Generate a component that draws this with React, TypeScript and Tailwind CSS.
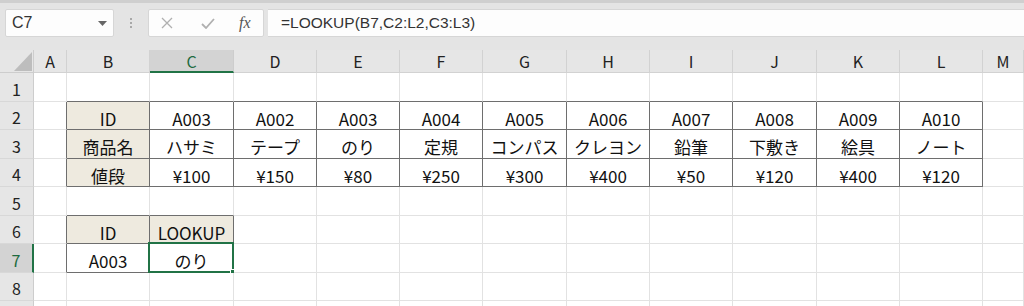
import React from "react"

const COL_LETTERS = ["A", "B", "C", "D", "E", "F", "G", "H", "I", "J", "K", "L", "M"]
const COL_W = ["w-[33px]", "w-[83px]", "w-[84px]", "w-[83px]", "w-[83px]", "w-[83px]", "w-[84px]", "w-[83px]", "w-[83px]", "w-[84px]", "w-[83px]", "w-[83px]", "w-[41px]"]
const ROW_H = ["h-[29px]", "h-[28px]", "h-[29px]", "h-[28px]", "h-[29px]", "h-[28px]", "h-[29px]", "h-[28px]", "h-[29px]"]

// data keyed by row number -> column index (0 = A)
const DATA: Record<number, string[]> = {
  2: ["", "ID", "A003", "A002", "A003", "A004", "A005", "A006", "A007", "A008", "A009", "A010"],
  3: ["", "商品名", "ハサミ", "テープ", "のり", "定規", "コンパス", "クレヨン", "鉛筆", "下敷き", "絵具", "ノート"],
  4: ["", "値段", "¥100", "¥150", "¥80", "¥250", "¥300", "¥400", "¥50", "¥120", "¥400", "¥120"],
  6: ["", "ID", "LOOKUP"],
  7: ["", "A003", "のり"],
}

const inTable = (r: number, c: number) => {
  if (r >= 2 && r <= 4 && c >= 1 && c <= 11) return true
  if (r >= 6 && r <= 7 && c >= 1 && c <= 2) return true
  return false
}

const isLabel = (r: number, c: number) => (c === 1 && r >= 2 && r <= 4) || (r === 6 && (c === 1 || c === 2))

function Cell({ r, c }: { r: number; c: number }) {
  const darkR = inTable(r, c) || inTable(r, c + 1)
  const darkB = inTable(r, c) || inTable(r + 1, c)
  const text = DATA[r]?.[c] ?? ""
  const selected = r === 7 && c === 2
  return (
    <div
      className={`${COL_W[c]} relative shrink-0 flex items-center justify-center pt-[5px] border-r border-b ${
        darkR ? "border-r-[#6e6e6e]" : "border-r-[#e2e2e2]"
      } ${darkB ? "border-b-[#6e6e6e]" : "border-b-[#e2e2e2]"} ${isLabel(r, c) ? "bg-[#eeeadf]" : "bg-white"}`}
    >
      <span className="text-[17px] leading-none text-[#111] whitespace-nowrap">{text}</span>
      {selected && (
        <div className="absolute -left-[2px] -top-[2px] -right-[1px] -bottom-[1px] border-2 border-[#217346]">
          <div className="absolute -right-[4px] -bottom-[4px] w-[6px] h-[6px] bg-[#217346] border border-white" />
        </div>
      )}
    </div>
  )
}

export default function App() {
  const rows = [1, 2, 3, 4, 5, 6, 7, 8, 9]
  return (
    <div className="w-[1024px] h-[306px] overflow-hidden bg-white" style={{ fontFamily: '"Noto Sans CJK JP", "Noto Sans", sans-serif' }}>
      {/* formula bar */}
      <div className="h-[50px] bg-[#e4e4e4] border-t-[3px] border-t-[#cfcfcf] pt-[6px] flex items-start">
        <div className="ml-[5px] w-[109px] h-[28px] bg-[#fdfdfd] border border-[#d6d6d6] rounded-[2px] flex items-center justify-between pl-[6px] pr-[6px]">
          <span className="text-[16px] text-[#333]" style={{ fontFamily: '"Liberation Sans", sans-serif' }}>C7</span>
          <svg width="9" height="5" viewBox="0 0 9 5"><polygon points="0,0 9,0 4.5,5" fill="#666" /></svg>
        </div>
        <div className="w-[34px] h-[28px] flex flex-col items-center justify-center gap-[2px]">
          <div className="w-[2px] h-[2px] bg-[#a8a8a8]" />
          <div className="w-[2px] h-[2px] bg-[#a8a8a8]" />
          <div className="w-[2px] h-[2px] bg-[#a8a8a8]" />
        </div>
        <div className="w-[116px] h-[28px] bg-[#fdfdfd] border border-[#d6d6d6] rounded-[2px] flex items-center">
          <svg className="ml-[12px]" width="12" height="12" viewBox="0 0 12 12">
            <path d="M1 1L11 11M11 1L1 11" stroke="#b0b0b0" strokeWidth="1.3" fill="none" />
          </svg>
          <svg className="ml-[28px]" width="14" height="11" viewBox="0 0 14 11">
            <path d="M1 6L5 10L13 1" stroke="#b0b0b0" strokeWidth="1.8" fill="none" />
          </svg>
          <span className="ml-[24px] text-[16px] italic text-[#555]" style={{ fontFamily: '"Liberation Serif", serif' }}>fx</span>
        </div>
        <div className="ml-[4px] flex-1 h-[28px] bg-[#fdfdfd] border-y border-[#d6d6d6] flex items-center pl-[13px]">
          <span className="text-[15.5px] text-[#333]" style={{ fontFamily: '"Liberation Sans", sans-serif' }}>=LOOKUP(B7,C2:L2,C3:L3)</span>
        </div>
      </div>

      {/* column headers */}
      <div className="flex h-[23px]">
        <div className="w-[34px] shrink-0 bg-[#e6e6e6] border-r border-b border-[#cdcdcd] relative">
          <svg className="absolute left-0 top-0" width="34" height="23" viewBox="0 0 34 23">
            <polygon points="14,21 32,21 32,2" fill="#bdbdbd" />
          </svg>
        </div>
        {COL_LETTERS.map((l, i) =>
          l === "C" ? (
            <div key={l} className={`${COL_W[i]} shrink-0 bg-[#d3d3d3] border-r border-r-[#cdcdcd] border-b-2 border-b-[#217346] flex items-center justify-center text-[16px] text-[#1d6b40]`}>
              {l}
            </div>
          ) : (
            <div key={l} className={`${COL_W[i]} shrink-0 bg-[#e6e6e6] border-r border-b border-[#d2d2d2] flex items-center justify-center text-[16px] text-[#222]`}>
              {l}
            </div>
          )
        )}
      </div>

      {/* rows */}
      {rows.map((r, ri) => (
        <div key={r} className={`flex ${ROW_H[ri]}`}>
          {r === 7 ? (
            <div className="w-[34px] shrink-0 bg-[#d3d3d3] border-r-2 border-r-[#217346] border-b border-b-[#d8d8d8] flex items-center justify-center pt-[3px] text-[16px] text-[#1d6b40]">
              {r}
            </div>
          ) : (
            <div className="w-[34px] shrink-0 bg-[#e6e6e6] border-r border-r-[#cdcdcd] border-b border-b-[#d8d8d8] flex items-center justify-center pt-[3px] text-[16px] text-[#222]">
              {r < 9 ? r : ""}
            </div>
          )}
          {COL_LETTERS.map((_, c) => (
            <Cell key={c} r={r} c={c} />
          ))}
        </div>
      ))}
    </div>
  )
}
